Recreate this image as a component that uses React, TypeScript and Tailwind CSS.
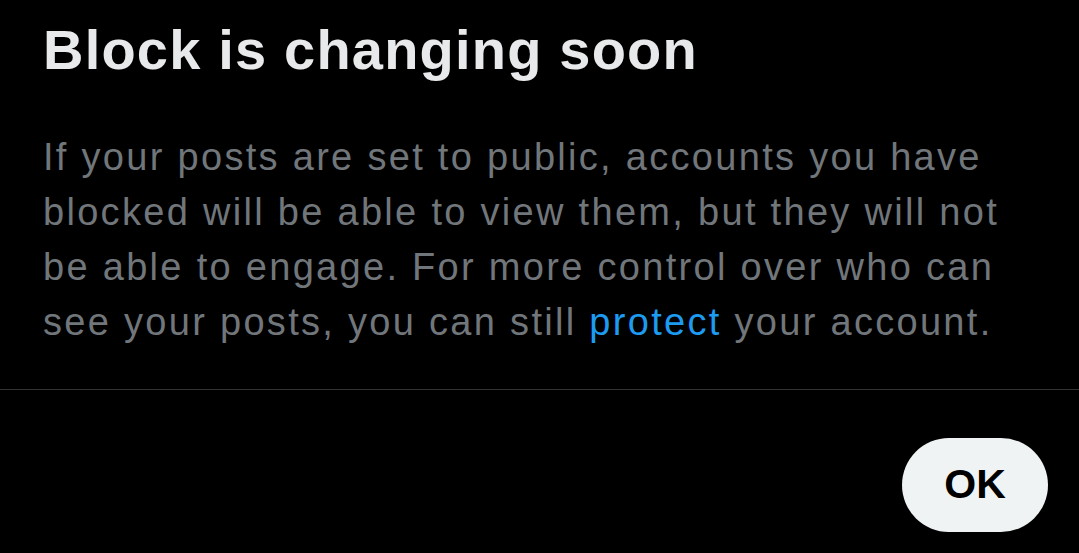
import React from "react";

export default function App() {
  return (
    <div
      className="w-[1079px] h-[553px] bg-black flex flex-col overflow-hidden"
      style={{ fontFamily: '"Liberation Sans", Arial, sans-serif' }}
    >
      <div className="pl-[43px] pt-[18px]">
        <h1 className="text-[56px] leading-[64px] font-bold text-[#e7e9ea] tracking-[1.2px] whitespace-nowrap">
          Block is changing soon
        </h1>
        <p className="mt-[48px] text-[38px] leading-[55px] text-[#71767b] tracking-[2.3px] whitespace-nowrap">
          If your posts are set to public, accounts you have
          <br />
          blocked will be able to view them, but they will not
          <br />
          be able to engage. For more control over who can
          <br />
          see your posts, you can still{" "}
          <span className="text-[#1d9bf0]">protect</span> your account.
        </p>
      </div>
      <div className="mt-[39px] h-px bg-[#2f3336]" />
      <div className="flex justify-end pr-[31px] pt-[48px]">
        <button className="w-[146px] h-[94px] rounded-full bg-[#eff3f4] text-black text-[41px] font-bold flex items-center justify-center">
          OK
        </button>
      </div>
    </div>
  );
}
